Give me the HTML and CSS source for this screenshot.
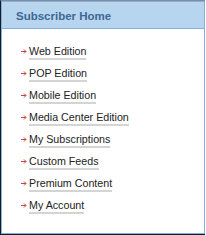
FILE: index.html
```html
<!DOCTYPE html>
<html>
<head>
  <title>Subscriber Home</title>
  <link rel="stylesheet" href="styles.css">
</head>
<body>
  <div class="frame">
    <div class="box">
      <h2 class="box-title">Subscriber Home</h2>
      <ul class="links">
        <li><span class="arrow"><svg width="6" height="5" viewBox="0 0 6 5"><path d="M0 2.5H5M3 0.5L5 2.5L3 4.5" fill="none" stroke="#c8424e" stroke-width="1"/></svg></span><a href="#">Web Edition</a></li>
        <li><span class="arrow"><svg width="6" height="5" viewBox="0 0 6 5"><path d="M0 2.5H5M3 0.5L5 2.5L3 4.5" fill="none" stroke="#c8424e" stroke-width="1"/></svg></span><a href="#">POP Edition</a></li>
        <li><span class="arrow"><svg width="6" height="5" viewBox="0 0 6 5"><path d="M0 2.5H5M3 0.5L5 2.5L3 4.5" fill="none" stroke="#c8424e" stroke-width="1"/></svg></span><a href="#">Mobile Edition</a></li>
        <li><span class="arrow"><svg width="6" height="5" viewBox="0 0 6 5"><path d="M0 2.5H5M3 0.5L5 2.5L3 4.5" fill="none" stroke="#c8424e" stroke-width="1"/></svg></span><a href="#">Media Center Edition</a></li>
        <li><span class="arrow"><svg width="6" height="5" viewBox="0 0 6 5"><path d="M0 2.5H5M3 0.5L5 2.5L3 4.5" fill="none" stroke="#c8424e" stroke-width="1"/></svg></span><a href="#">My Subscriptions</a></li>
        <li><span class="arrow"><svg width="6" height="5" viewBox="0 0 6 5"><path d="M0 2.5H5M3 0.5L5 2.5L3 4.5" fill="none" stroke="#c8424e" stroke-width="1"/></svg></span><a href="#">Custom Feeds</a></li>
        <li><span class="arrow"><svg width="6" height="5" viewBox="0 0 6 5"><path d="M0 2.5H5M3 0.5L5 2.5L3 4.5" fill="none" stroke="#c8424e" stroke-width="1"/></svg></span><a href="#">Premium Content</a></li>
        <li><span class="arrow"><svg width="6" height="5" viewBox="0 0 6 5"><path d="M0 2.5H5M3 0.5L5 2.5L3 4.5" fill="none" stroke="#c8424e" stroke-width="1"/></svg></span><a href="#">My Account</a></li>
      </ul>
    </div>
  </div>
</body>
</html>
```

FILE: styles.css
```css
html, body { margin: 0; padding: 0; background: #fff; }
body { font-family: "Liberation Sans", Arial, sans-serif; }
.frame {
  width: 205px;
  height: 235px;
  box-sizing: border-box;
  border-left: 1px solid #1a1a1a;
  border-top: 1px solid #8a8a8a;
  border-bottom: 1px solid #1a1a1a;
}
.box {
  height: 100%;
  box-sizing: border-box;
  border: 1px solid #7fb1e3;
}
.box-title {
  margin: 0;
  height: 26px;
  padding-left: 14px;
  background-color: #b8d5ef;
  border-bottom: 1px solid #7fb1e3;
  color: #3d6794;
  font-size: 11.5px;
  font-weight: bold;
  line-height: 28px;
}
.links { list-style: none; margin: 0; padding: 12px 0 0 19px; }
.links li { display: flex; align-items: center; height: 22px; }
.arrow { display: flex; width: 8px; margin-top: -2px; }
.links a {
  color: #222;
  text-decoration: none;
  font-size: 10.7px;
  line-height: 14px;
  border-bottom: 2px solid #d4d4d4;
}
```
